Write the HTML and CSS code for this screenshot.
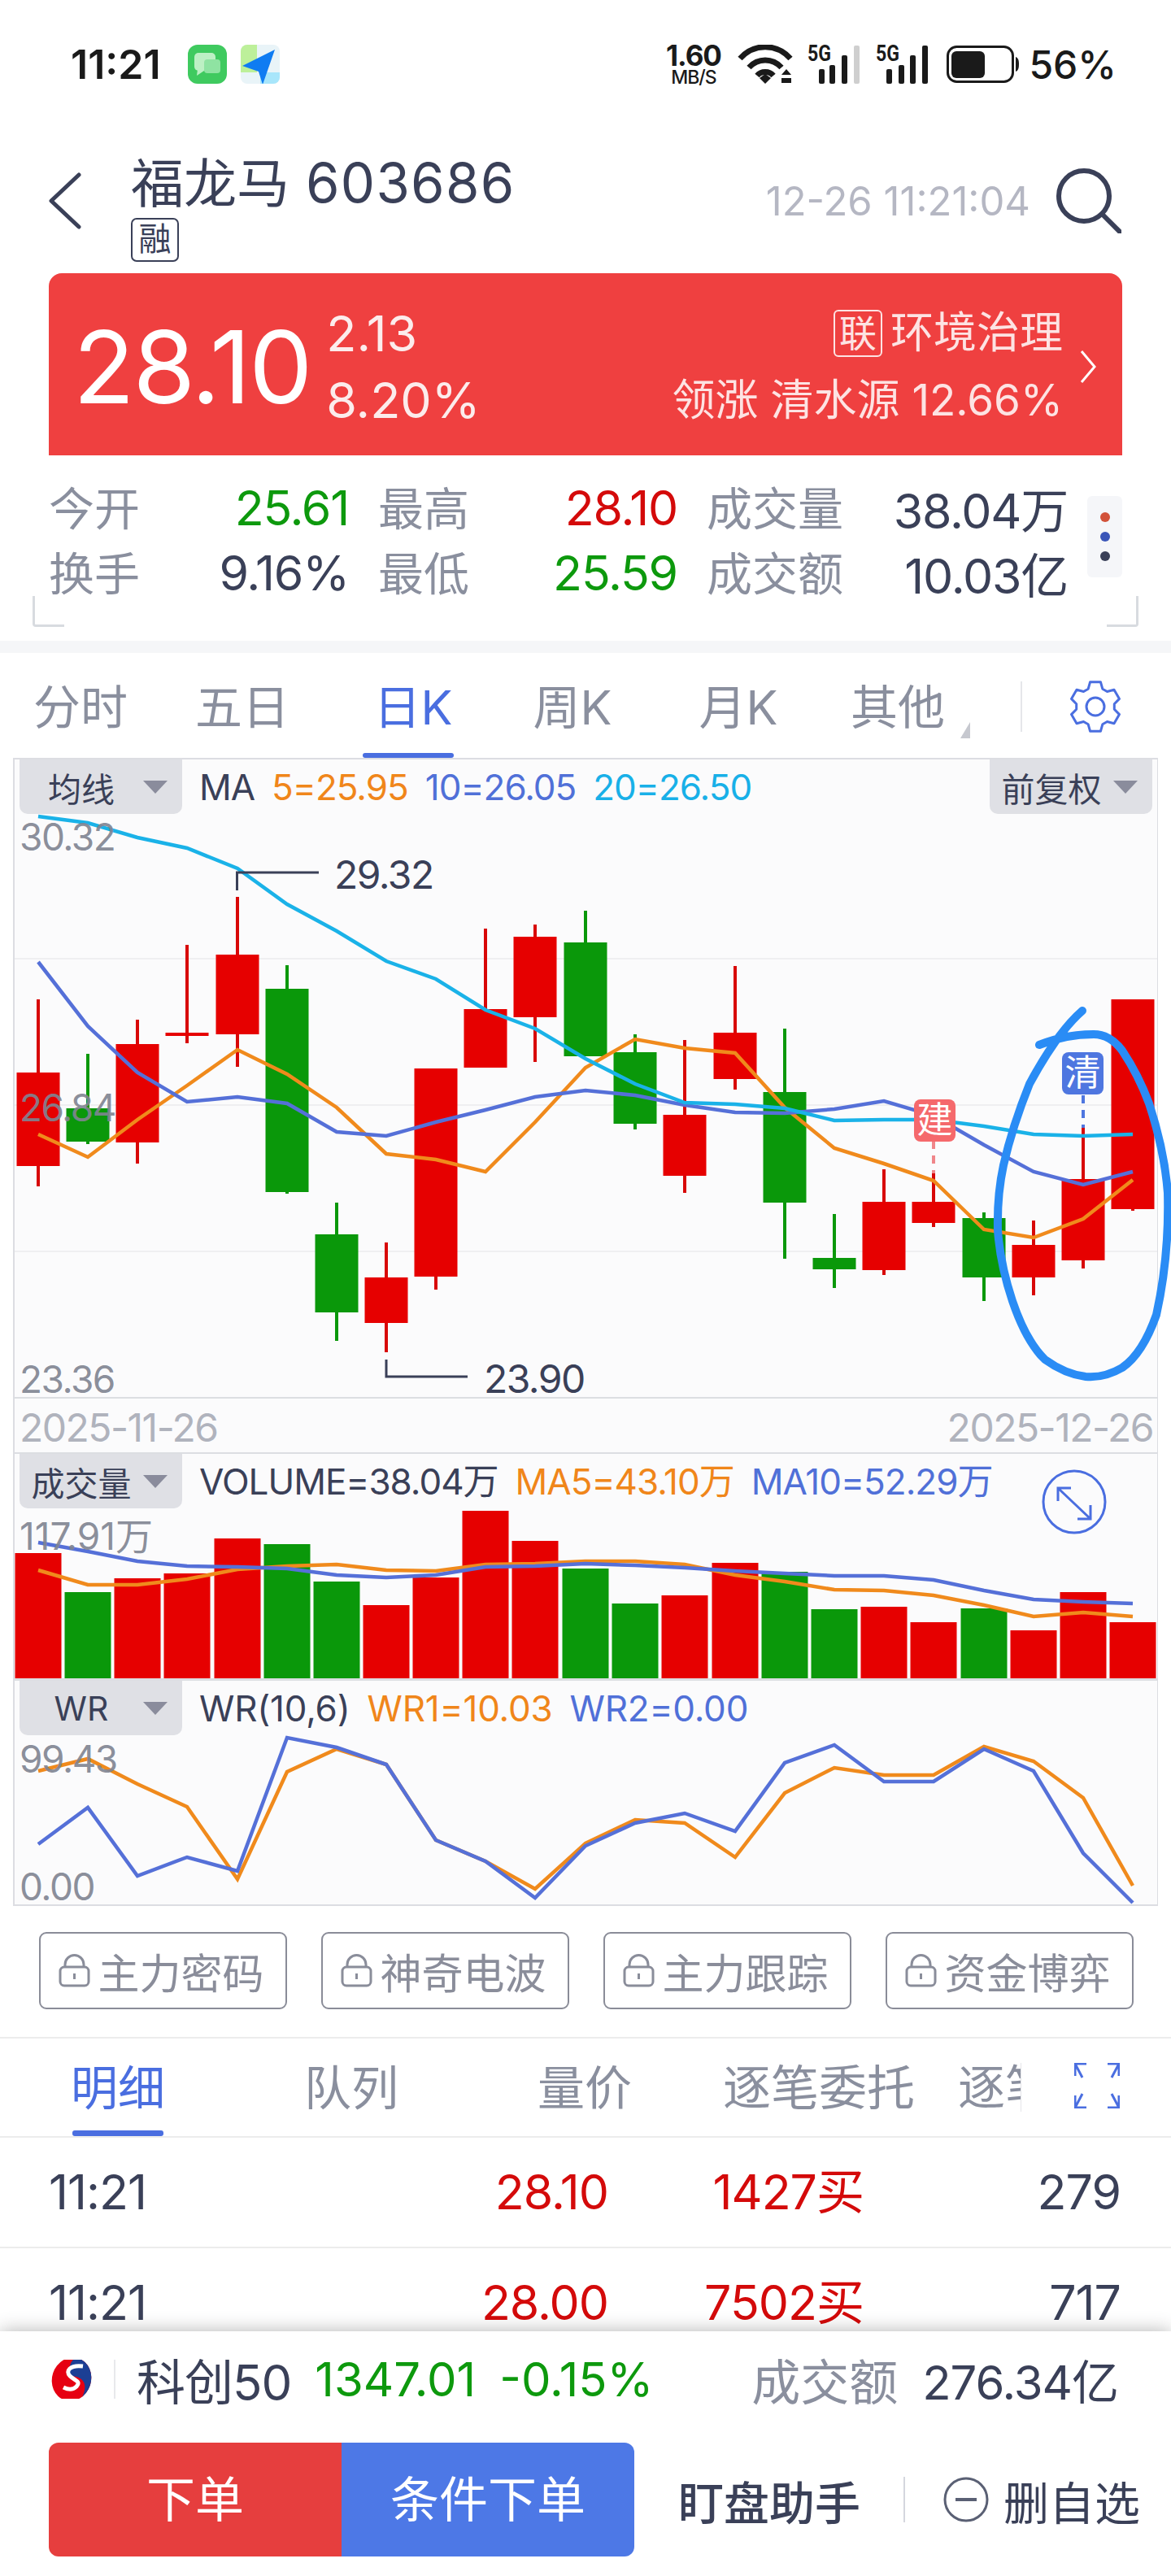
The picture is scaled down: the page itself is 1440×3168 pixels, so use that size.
FILE: index.html
```html
<!doctype html>
<html lang="zh">
<head>
<meta charset="utf-8">
<title>福龙马603686</title>
<link rel="stylesheet" href="styles.css">
</head>
<body>

<div class="status">
    <span class="clock">11:21</span>
    <svg class="app-icon app-first" viewBox="0 0 48 48">
        <rect width="48" height="48" rx="12" fill="#3fca5f"/>
        <rect x="8" y="10" width="26" height="22" rx="5" fill="#bdf0c4"/>
        <path d="M12 30l-1 8 9-6z" fill="#bdf0c4"/>
        <rect x="20" y="18" width="20" height="17" rx="4" fill="#8fe3a2"/>
    </svg>
    <svg class="app-icon app-second" viewBox="0 0 48 48">
        <rect width="48" height="48" rx="8" fill="#e9f4f8"/>
        <path d="M0 8a8 8 0 0 1 8-8h12v34H0z" fill="#bdf09a"/>
        <path d="M24 34h24v6a8 8 0 0 1-8 8H24z" fill="#a8e6fb"/>
        <path d="M42 6L2 26l20 7 5 16z" fill="#0f7cf2"/>
    </svg>
    <div class="status-right">
        <div class="speed"><b>1.60</b><span>MB/S</span></div>
        <svg class="wifi" viewBox="0 0 68 48" fill="none" stroke="#1a1a1a" stroke-width="7">
            <path d="M3 17C20 -2 48 -2 65 17"/>
            <path d="M14 28C25 16 43 16 54 28"/>
            <path d="M24 38C29 32 39 32 44 38"/>
            <path d="M34 48l-7-7 7-5 7 5z" fill="#1a1a1a" stroke="none"/>
            <path d="M60 30l6 7H54zM54 41h12v6H54z" fill="#1a1a1a" stroke="none"/>
        </svg>
        <svg class="signal" viewBox="0 0 64 48">
            <text x="0" y="20" class="signal-5g" textLength="29" lengthAdjust="spacingAndGlyphs">5G</text>
            <rect x="14" y="30" width="7" height="18" rx="2"/>
            <rect x="27" y="25" width="7" height="23" rx="2"/>
            <rect x="42" y="13" width="7" height="35" rx="2"/>
            <rect x="57" y="1" width="7" height="47" rx="2" fill="#cfcfcf"/>
        </svg>
        <svg class="signal" viewBox="0 0 64 48">
            <text x="0" y="20" class="signal-5g" textLength="29" lengthAdjust="spacingAndGlyphs">5G</text>
            <rect x="13" y="30" width="7" height="18" rx="2"/>
            <rect x="28" y="25" width="7" height="23" rx="2"/>
            <rect x="42" y="13" width="7" height="35" rx="2"/>
            <rect x="57" y="1" width="7" height="47" rx="2"/>
        </svg>
        <svg class="battery" viewBox="0 0 89 46">
            <rect x="1.5" y="1.5" width="80" height="43" rx="11" fill="none" stroke="#1a1a1a" stroke-width="3"/>
            <rect x="6" y="7" width="41" height="33" rx="6" fill="#1a1a1a"/>
            <path d="M85 14c3 1 4 4 4 9s-1 8-4 9z" fill="#1a1a1a"/>
        </svg>
        <span class="percent">56%</span>
    </div>
</div>

<div class="header">
    <svg class="back" viewBox="0 0 40 70" fill="none" stroke="#3a4058" stroke-width="5" stroke-linecap="round" stroke-linejoin="round">
        <path d="M37 3L3 35l34 32"/>
    </svg>
    <div class="title-block">
        <div class="title">福龙马<span class="code">603686</span></div>
        <span class="rong">融</span>
    </div>
    <span class="stamp">12-26 11:21:04</span>
    <svg class="search" viewBox="0 0 80 80" fill="none" stroke="#3a4058" stroke-width="6" stroke-linecap="round">
        <circle cx="34" cy="34" r="31"/>
        <path d="M58 58l20 20"/>
    </svg>
</div>

<div class="quote">
    <span class="price">28.10</span>
    <div class="change">
        <span>2.13</span>
        <span>8.20%</span>
    </div>
    <div class="sector">
        <div class="sector-top"><span class="lian">联</span>环境治理</div>
        <div>领涨 清水源 12.66%</div>
    </div>
    <svg class="quote-arrow" viewBox="0 0 20 40" fill="none" stroke="#fff" stroke-width="3">
        <path d="M2 1l16 19L2 39"/>
    </svg>
</div>

<div class="stats">
    <div class="stats-grid">
        <div class="stat"><span class="label">今开</span><span class="val green">25.61</span></div>
        <div class="stat"><span class="label">最高</span><span class="val red">28.10</span></div>
        <div class="stat"><span class="label">成交量</span><span class="val">38.04万</span></div>
        <div class="stat"><span class="label">换手</span><span class="val">9.16%</span></div>
        <div class="stat"><span class="label">最低</span><span class="val green">25.59</span></div>
        <div class="stat"><span class="label">成交额</span><span class="val">10.03亿</span></div>
    </div>
    <div class="more">
        <i class="dot dot-red"></i>
        <i class="dot dot-blue"></i>
        <i class="dot dot-dark"></i>
    </div>
</div>

<div class="periods">
    <span class="period">分时</span>
    <span class="period">五日</span>
    <span class="period active">日K</span>
    <span class="period">周K</span>
    <span class="period">月K</span>
    <span class="period period-other">其他</span>
    <svg class="gear" viewBox="-33 -33 66 66" fill="none" stroke="#4a6ee0" stroke-width="3" stroke-linejoin="round">
        <polygon points="-6.4,-30.3 6.4,-30.3 8.8,-21.8 14.5,-18.5 23,-20.7 29.5,-9.6 23.3,-3.3 23.3,3.3 29.5,9.6 23,20.7 14.5,18.5 8.8,21.8 6.4,30.3 -6.4,30.3 -8.8,21.8 -14.5,18.5 -23,20.7 -29.5,9.6 -23.3,3.3 -23.3,-3.3 -29.5,-9.6 -23,-20.7 -14.5,-18.5 -8.8,-21.8"/>
        <circle r="11"/>
    </svg>
</div>

<div class="chart-wrap">
    <div class="chart">
        <div class="pane pane-main">
            <div class="pane-head">
                <div class="picker"><span>均线</span><i></i></div>
                <span class="leg dark">MA</span>
                <span class="leg orange">5=25.95</span>
                <span class="leg blue">10=26.05</span>
                <span class="leg cyan">20=26.50</span>
                <div class="picker picker-right"><span>前复权</span><i></i></div>
            </div>
        </div>
        <div class="pane-dates">
            <span>2025-11-26</span>
            <span>2025-12-26</span>
        </div>
        <div class="pane pane-vol">
            <div class="pane-head">
                <div class="picker"><span>成交量</span><i></i></div>
                <span class="leg dark">VOLUME=38.04万</span>
                <span class="leg orange">MA5=43.10万</span>
                <span class="leg blue">MA10=52.29万</span>
            </div>
        </div>
        <div class="pane pane-wr">
            <div class="pane-head">
                <div class="picker"><span>WR</span><i></i></div>
                <span class="leg dark">WR(10,6)</span>
                <span class="leg orange">WR1=10.03</span>
                <span class="leg blue">WR2=0.00</span>
            </div>
        </div>
    </div>

    <!-- all of the plot, in page coordinates -->
    <svg class="plot" viewBox="0 932 1440 1412" fill="none">
        <path class="grid" d="M18 1179H1423M18 1359H1423M18 1539H1423"/>

        <path class="wick-red" d="M47 1229V1459M169 1254V1431M230 1162V1283M292 1103V1312M475 1528V1663M536 1314V1586M597 1142V1313M658 1137V1306M842 1279V1467M904 1188V1340M1087 1438V1568M1148 1443V1509M1271 1501V1593M1332 1387V1560M1393 1229V1489"/>
        <path class="wick-green" d="M108 1296V1407M353 1187V1468M414 1479V1649M720 1120V1299M781 1272V1389M965 1265V1548M1026 1493V1584M1210 1491V1600"/>
        <path class="body-red" d="M20.5 1319h53v115h-53zM142.5 1284h53v121h-53zM203.5 1270h53v4h-53zM265.5 1174h53v98h-53zM448.5 1571h53v56h-53zM509.5 1314h53v256h-53zM570.5 1241h53v72h-53zM631.5 1152h53v99h-53zM815.5 1371h53v75h-53zM877.5 1270h53v57h-53zM1060.5 1478h53v84h-53zM1121.5 1478h53v26h-53zM1244.5 1531h53v40h-53zM1305.5 1450h53v100h-53zM1366.5 1229h53v258h-53z"/>
        <path class="body-green" d="M81.5 1363h53v41h-53zM326.5 1216h53v250h-53zM387.5 1518h53v96h-53zM693.5 1159h53v140h-53zM754.5 1294h53v88h-53zM938.5 1343h53v136h-53zM999.5 1547h53v14h-53zM1183.5 1498h53v73h-53z"/>

        <polyline class="line-orange" points="47,1395 108,1423 169,1377 230,1335 292,1291 353,1321 414,1362 475,1419 536,1426 597,1441 658,1380 720,1313 781,1278 842,1289 904,1295 965,1362 1026,1412 1087,1431 1148,1452 1210,1512 1271,1522 1332,1499 1393,1451"/>
        <polyline class="line-blue" points="47,1183 108,1262 169,1319 230,1355 292,1349 353,1357 414,1392 475,1397 536,1380 597,1365 658,1349 720,1341 781,1347 842,1359 904,1368 965,1369 1026,1364 1087,1354 1148,1372 1210,1408 1271,1441 1332,1457 1393,1441"/>
        <polyline class="line-cyan" points="47,1004 108,1012 169,1030 230,1043 292,1068 353,1112 414,1145 475,1182 536,1204 597,1242 658,1265 720,1302 781,1333 842,1356 904,1358 965,1363 1026,1378 1087,1377 1148,1377 1210,1385 1271,1395 1332,1397 1393,1395"/>

        <path class="marker" d="M291.500 1095V1073H392M475 1672V1693H575"/>
        <path class="dash-red" d="M1148 1403V1443"/>
        <path class="dash-blue" d="M1332 1347V1387"/>

        <path class="body-red" d="M18.500 1910h57V2064h-57zM140.500 1941h57V2064h-57zM201.500 1935h57V2064h-57zM263.500 1892h57V2064h-57zM446.500 1974h57V2064h-57zM507.500 1940h57V2064h-57zM568.500 1858h57V2064h-57zM629.500 1895h57V2064h-57zM813.500 1962h57V2064h-57zM875.500 1922h57V2064h-57zM1058.500 1976h57V2064h-57zM1119.500 1995h57V2064h-57zM1242.500 2005h57V2064h-57zM1303.500 1958h57V2064h-57zM1364.500 1995h57V2064h-57z"/>
        <path class="body-green" d="M79.500 1958h57V2064h-57zM324.500 1899h57V2064h-57zM385.500 1945h57V2064h-57zM691.500 1929h57V2064h-57zM752.500 1972h57V2064h-57zM936.500 1933h57V2064h-57zM997.500 1979h57V2064h-57zM1181.500 1978h57V2064h-57z"/>

        <polyline class="line-orange" points="47,1931 108,1949 169,1949 230,1942 292,1930 353,1926 414,1924 475,1931 536,1932 597,1924 658,1923 720,1920 781,1920 842,1924 904,1937 965,1945 1026,1955 1087,1956 1148,1962 1210,1974 1271,1988 1332,1983 1393,1988"/>
        <polyline class="line-blue" points="47,1897 108,1908 169,1920 230,1926 292,1927 353,1929 414,1937 475,1940 536,1937 597,1927 658,1926 720,1923 781,1925 842,1928 904,1932 965,1935 1026,1938 1087,1938 1148,1943 1210,1956 1271,1967 1332,1970 1393,1972"/>

        <polyline class="line-orange" points="47,2178 108,2163 169,2194 230,2222 292,2311 353,2179 414,2151 475,2170 536,2263 597,2289 658,2323 720,2267 781,2238 842,2242 904,2284 965,2205 1026,2174 1087,2183 1148,2183 1210,2148 1271,2166 1332,2211 1393,2319"/>
        <polyline class="line-blue" points="47,2268 108,2223 169,2307 230,2284 292,2301 353,2137 414,2149 475,2170 536,2263 597,2289 658,2334 720,2270 781,2242 842,2230 904,2252 965,2168 1026,2146 1087,2191 1148,2191 1210,2151 1271,2178 1332,2279 1393,2340"/>
    </svg>

    <span class="axis axis-high">30.32</span>
    <span class="axis axis-mid">26.84</span>
    <span class="axis axis-low">23.36</span>
    <span class="axis axis-vol">117.91万</span>
    <span class="axis axis-wr-high">99.43</span>
    <span class="axis axis-wr-low">0.00</span>
    <span class="peak peak-high">29.32</span>
    <span class="peak peak-low">23.90</span>
    <span class="trade-tag tag-build">建</span>
    <span class="trade-tag tag-clear">清</span>

    <svg class="fit-btn" viewBox="0 0 80 80" fill="none" stroke="#4a6ee0" stroke-width="3">
        <circle cx="40" cy="40" r="38"/>
        <path d="M21 24L59 60M20 39V23H36M60 44V61H44"/>
    </svg>

    <!-- the blue ring somebody drew over the screenshot -->
    <svg class="plot scribble" viewBox="0 932 1440 1412" fill="none">
        <path d="M1278 1285Q1310 1272 1345 1272Q1365 1272 1380 1292Q1400 1322 1413 1357Q1432 1415 1436 1467Q1438 1545 1422 1617Q1405 1665 1380 1682Q1358 1695 1335 1693Q1310 1690 1285 1672Q1262 1650 1245 1600Q1230 1555 1227 1513Q1226 1470 1234 1433Q1245 1385 1266 1333Q1300 1270 1331 1243"/>
    </svg>
</div>

<div class="tools">
    <div class="tool"><svg class="lock" viewBox="0 0 39 41" fill="none"><path d="M8 17V13a11.500 11.500 0 0 1 23 0v4"/><rect x="2" y="16" width="35" height="23" rx="5"/><path d="M19.500 24v7"/></svg>主力密码</div>
    <div class="tool"><svg class="lock" viewBox="0 0 39 41" fill="none"><path d="M8 17V13a11.500 11.500 0 0 1 23 0v4"/><rect x="2" y="16" width="35" height="23" rx="5"/><path d="M19.500 24v7"/></svg>神奇电波</div>
    <div class="tool"><svg class="lock" viewBox="0 0 39 41" fill="none"><path d="M8 17V13a11.500 11.500 0 0 1 23 0v4"/><rect x="2" y="16" width="35" height="23" rx="5"/><path d="M19.500 24v7"/></svg>主力跟踪</div>
    <div class="tool"><svg class="lock" viewBox="0 0 39 41" fill="none"><path d="M8 17V13a11.500 11.500 0 0 1 23 0v4"/><rect x="2" y="16" width="35" height="23" rx="5"/><path d="M19.500 24v7"/></svg>资金博弈</div>
</div>

<div class="detail-tabs">
    <span class="dt active">明细</span>
    <span class="dt">队列</span>
    <span class="dt">量价</span>
    <span class="dt dt-wide">逐笔委托</span>
    <span class="dt dt-cut">逐笔成交</span>
    <svg class="fullscreen" viewBox="0 0 56 56" fill="none" stroke="#4a6ee0" stroke-width="3">
        <path d="M1 16V1H15M1 1L10 18M55 16V1H41M55 1L46 18M1 40V55H15M1 55L10 38M55 40V55H41M55 55L46 38"/>
    </svg>
</div>

<div class="trades">
    <div class="trade">
        <span class="t-time">11:21</span>
        <span class="red">28.10</span>
        <span class="red">1427买</span>
        <span>279</span>
    </div>
    <div class="trade">
        <span class="t-time">11:21</span>
        <span class="red">28.00</span>
        <span class="red">7502买</span>
        <span>717</span>
    </div>
</div>

<div class="dock">
    <div class="index-row">
        <svg class="logo" viewBox="0 0 56 48">
            <defs><clipPath id="logo-clip"><ellipse cx="28" cy="24" rx="24" ry="27" transform="rotate(18 28 24)"/></clipPath></defs>
            <g clip-path="url(#logo-clip)">
                <rect width="56" height="48" fill="#e60012"/>
                <path d="M30 0H56V48H40C48 34 46 20 26 20C24 12 26 4 30 0Z" fill="#1c3f94"/>
                <path d="M42 8C26 6 20 14 26 20C32 26 40 26 34 33C30 37 24 37 18 34" fill="none" stroke="#fff" stroke-width="5"/>
            </g>
        </svg>
        <i class="index-sep"></i>
        <span class="index-name">科创50</span>
        <span class="index-val green">1347.01</span>
        <span class="index-val green">-0.15%</span>
        <span class="index-amount label">成交额</span>
        <span class="index-total">276.34亿</span>
    </div>
    <div class="actions">
        <div class="order">
            <span class="order-red">下单</span>
            <span class="order-blue">条件下单</span>
        </div>
        <span class="assist">盯盘助手</span>
        <i class="action-sep"></i>
        <svg class="minus" viewBox="0 0 56 56" fill="none" stroke="#5a6074" stroke-width="3">
            <circle cx="28" cy="28" r="26"/>
            <path d="M15 28H41" stroke-width="4"/>
        </svg>
        <span class="remove">删自选</span>
    </div>
</div>

</body>
</html>
```

FILE: styles.css
```css
* { box-sizing: border-box; }
html, body { margin: 0; padding: 0; }
body {
    width: 1440px;
    height: 3168px;
    overflow: hidden;
    background: #fff;
    color: #3a4058;
    font-family: Inter, "Noto Sans CJK SC", sans-serif;
}
i { display: block; font-style: normal; }

.red { color: #d40a0a; }
.green { color: #0d990d; }
.label { color: #8a8f9e; }

/* status bar */
.status {
    display: flex;
    align-items: center;
    height: 158px;
    padding: 0 67px 0 87px;
    color: #1a1a1a;
}
.clock { font-size: 50px; font-weight: 600; letter-spacing: 0; }
.app-icon { width: 48px; height: 48px; }
.app-first { margin-left: 33px; }
.app-second { margin-left: 17px; }
.status-right { display: flex; align-items: center; margin-left: auto; }
.speed { display: flex; flex-direction: column; align-items: center; width: 71px; line-height: 1; }
.speed b { font-size: 35px; font-weight: 700; line-height: 32px; letter-spacing: -1px; }
.speed span { font-size: 23px; font-weight: 500; line-height: 22px; letter-spacing: -1px; }
.wifi { width: 68px; height: 48px; margin-left: 19px; }
.signal { width: 64px; height: 48px; margin-left: 18px; fill: #1a1a1a; overflow: visible; }
.signal + .signal { margin-left: 20px; }
.signal-5g { font-family: Roboto, sans-serif; font-size: 27px; font-weight: 700; }
.battery { width: 89px; height: 46px; margin-left: 23px; }
.percent { margin-left: 12px; font-size: 48px; font-weight: 500; letter-spacing: 0; }

/* header */
.header { display: flex; align-items: center; height: 178px; padding: 0 61px 0 60px; }
.back { width: 40px; height: 70px; }
.title-block { align-self: flex-start; margin-left: 61px; padding-top: 31px; }
.title { font-size: 65px; line-height: 72px; white-space: nowrap; }
.code { margin-left: 20px; font-size: 67px; letter-spacing: 1.300px; }
.rong {
    display: block;
    width: 59px;
    height: 54px;
    margin-top: 6px;
    border: 2px solid #3a4058;
    border-radius: 7px;
    font-size: 40px;
    line-height: 48px;
    text-align: center;
}
.stamp { margin-left: auto; font-size: 49px; color: #b5b7c3; letter-spacing: 0; }
.search { width: 80px; height: 80px; margin-left: 32px; }

/* red quote card */
.quote {
    display: flex;
    align-items: center;
    height: 224px;
    margin: 0 60px;
    padding: 6px 32px 0 30px;
    background: #ef4040;
    border-radius: 16px 16px 0 0;
    color: #fff;
}
.price { font-size: 124px; line-height: 1; letter-spacing: -2.200px; }
.change { display: flex; flex-direction: column; margin-left: 19px; font-size: 61px; line-height: 82px; color: #fcecec; }
.sector { margin-left: auto; font-size: 53px; line-height: 83px; text-align: right; color: #fde3e3; white-space: nowrap; }
.sector-top { display: flex; align-items: center; justify-content: flex-end; }
.lian {
    width: 60px;
    height: 58px;
    margin-right: 10px;
    border: 2px solid #fde3e3;
    border-radius: 6px;
    font-size: 46px;
    line-height: 52px;
    text-align: center;
}
.quote-arrow { width: 20px; height: 40px; margin-left: 21px; }

/* stats */
.stats { position: relative; display: flex; height: 243px; padding: 24px 60px 0; border-bottom: 15px solid #f5f6f8; }
.stats::before, .stats::after {
    content: "";
    position: absolute;
    top: 173px;
    width: 36px;
    height: 35px;
    border-bottom: 3px solid #d8dbe0;
}
.stats::before { left: 40px; border-left: 3px solid #d8dbe0; border-bottom-left-radius: 4px; }
.stats::after { right: 40px; border-right: 3px solid #d8dbe0; border-bottom-right-radius: 4px; }
.stats-grid { display: grid; grid-template-columns: 369px 368px 444px; column-gap: 36px; grid-auto-rows: 80px; width: 1250px; }
.stat { display: flex; align-items: center; justify-content: space-between; }
.stat .label { margin-bottom: 5px; font-size: 56px; }
.val { font-size: 59px; letter-spacing: -1.200px; white-space: nowrap; }
.more {
    display: flex;
    flex-direction: column;
    align-items: center;
    gap: 12px;
    width: 43px;
    height: 100px;
    margin: 26px 0 0 27px;
    padding-top: 20px;
    background: #f5f6f9;
    border-radius: 6px;
}
.dot { width: 12px; height: 12px; border-radius: 50%; }
.dot-red { background: #d2523a; }
.dot-blue { background: #3a55b8; }
.dot-dark { background: #3a4058; }

/* period tabs */
.periods {
    display: grid;
    grid-template-columns: 198px 200px 220px 172px 236px 156px 1fr;
    align-items: center;
    height: 129px;
    padding-bottom: 10px;
}
.period { position: relative; height: 119px; font-size: 58px; line-height: 134px; text-align: center; color: #8a8f9e; }
.period.active { color: #4a6ee0; }
.period.active::after {
    content: "";
    position: absolute;
    left: 48px;
    bottom: -10px;
    width: 112px;
    height: 6px;
    border-radius: 3px;
    background: #4a6ee0;
}
.period-other::after {
    content: "";
    position: absolute;
    right: -11px;
    bottom: 14px;
    border-left: 12px solid transparent;
    border-bottom: 20px solid #c6c8cf;
}
.gear { width: 66px; height: 66px; margin-left: 132px; margin-top: 12px; }
.periods::after {
    content: "";
    position: absolute;
    left: 1255px;
    top: 838px;
    width: 2px;
    height: 62px;
    background: #e5e6ea;
}

/* chart */
.chart-wrap { position: relative; height: 1412px; }
.chart {
    width: 1408px;
    height: 1412px;
    margin-left: 16px;
    border: 2px solid #dcdde2;
    border-right-width: 1px;
    background: #fbfbfc;
}
.pane { position: relative; }
.pane-main { height: 786px; border-bottom: 2px solid #dcdee2; }
.pane-dates {
    display: flex;
    justify-content: space-between;
    align-items: center;
    height: 68px;
    padding: 4px 5px 0 6px;
    border-bottom: 2px solid #dcdee2;
    font-size: 48px;
    letter-spacing: -1.500px;
    color: #b0b3bd;
}
.pane-vol { height: 279px; border-bottom: 3px solid #dcdee2; }
.pane-wr { height: 275px; }
.pane-head { position: relative; z-index: 2; display: flex; gap: 21px; height: 67px; }
.picker {
    display: flex;
    align-items: center;
    width: 200px;
    height: 67px;
    margin-left: 6px;
    background: #dfe0e5;
    border-radius: 0 0 10px 10px;
    font-size: 41px;
}
.picker span { width: 152px; text-align: center; }
.picker i {
    border-left: 15px solid transparent;
    border-right: 15px solid transparent;
    border-top: 16px solid #8a8c9c;
}
.picker-right { margin-left: auto; margin-right: 6px; }
.leg { font-size: 44px; line-height: 68px; letter-spacing: -1px; white-space: nowrap; }
.pane-wr .leg { letter-spacing: -.2px; }
.dark { color: #3a4058; }
.orange { color: #f0861a; }
.blue { color: #5070d8; }
.cyan { color: #18b0e8; }

.plot { position: absolute; left: 0; top: 0; z-index: 1; width: 1440px; height: 1412px; }
.grid { stroke: #efeff1; stroke-width: 2; }
.wick-red { stroke: #d80808; stroke-width: 4; }
.wick-green { stroke: #0a980a; stroke-width: 4; }
.body-red { fill: #e60000; }
.body-green { fill: #0a980a; }
.line-orange { stroke: #f08a1c; stroke-width: 4.500; }
.line-blue { stroke: #5570d8; stroke-width: 4.500; }
.line-cyan { stroke: #1ab2e8; stroke-width: 4.500; }
.marker { stroke: #3a4058; stroke-width: 3; }
.dash-red { stroke: #f0868a; stroke-width: 4; stroke-dasharray: 10 8; }
.dash-blue { stroke: #4e76e0; stroke-width: 4; stroke-dasharray: 10 8; }
.scribble { z-index: 4; }
.scribble path { stroke: #2a8cf5; stroke-width: 10; stroke-linecap: round; }

.axis {
    position: absolute;
    left: 24px;
    z-index: 2;
    font-size: 46px;
    line-height: 46px;
    letter-spacing: -1.500px;
    color: rgba(128, 132, 146, .92);
}
.axis-high { top: 74px; }
.axis-mid { top: 407px; }
.axis-low { top: 741px; }
.axis-vol { top: 934px; letter-spacing: 0; }
.axis-wr-high { top: 1208px; }
.axis-wr-low { top: 1365px; }
.peak { position: absolute; z-index: 2; font-size: 48px; line-height: 48px; letter-spacing: -1.500px; }
.peak-high { top: 120px; left: 411px; }
.peak-low { top: 740px; left: 595px; }
.trade-tag {
    position: absolute;
    z-index: 3;
    width: 51px;
    height: 52px;
    border-radius: 8px;
    font-size: 44px;
    line-height: 50px;
    text-align: center;
    color: #fff;
}
.tag-build { left: 1124px; top: 420px; background: #f5696c; }
.tag-clear { left: 1306px; top: 362px; background: #4e76e0; }
.fit-btn { position: absolute; left: 1281px; top: 875px; z-index: 3; width: 80px; height: 80px; }

/* locked tools */
.tools { display: flex; gap: 42px; padding: 32px 0 0 48px; height: 163px; border-bottom: 2px solid #ececec; }
.tool {
    display: flex;
    align-items: center;
    justify-content: center;
    gap: 9px;
    width: 305px;
    height: 95px;
    border: 2px solid #8a8c98;
    border-radius: 9px;
    font-size: 51px;
    color: #8a8d9a;
}
.lock { width: 39px; height: 41px; margin-left: -4px; stroke: #8a8d9a; stroke-width: 3; }

/* detail tabs */
.detail-tabs {
    display: flex;
    align-items: center;
    height: 122px;
    padding-left: 87px;
    border-bottom: 2px solid #ececec;
    font-size: 58px;
    color: #8a8f9e;
}
.dt { position: relative; width: 287px; height: 120px; line-height: 122px; white-space: nowrap; }
.dt.active { color: #4a6ee0; }
.dt.active::after {
    content: "";
    position: absolute;
    left: 2px;
    bottom: 0;
    width: 112px;
    height: 7px;
    border-radius: 3px;
    background: #4a6ee0;
}
.dt-wide { width: 289px; margin-left: -59px; font-size: 59px; }
.dt-cut { width: 78px; height: 60px; line-height: 60px; overflow: hidden; border-right: 1px solid #e4e5e9; }
.fullscreen { width: 56px; height: 56px; margin-left: 65px; margin-top: -4px; }

/* trade list */
.trades { height: 238px; overflow: hidden; }
.trade {
    display: grid;
    grid-template-columns: 320px 368px 314px 316px;
    height: 136px;
    padding-left: 60px;
    border-bottom: 2px solid #ececec;
    font-size: 59px;
    line-height: 134px;
    letter-spacing: -1px;
    text-align: right;
}
.t-time { text-align: left; }

/* bottom dock */
.dock { position: relative; z-index: 5; background: #fff; box-shadow: 0 0 22px rgba(0, 0, 0, .3); height: 301px; }
.index-row { display: flex; align-items: center; height: 137px; padding: 0 65px 20px 60px; font-size: 58px; }
.logo { width: 56px; height: 48px; }
.index-sep { width: 2px; height: 48px; margin-left: 24px; background: #e8e9ec; }
.index-name { margin-left: 26px; font-size: 60px; letter-spacing: -1px; }
.index-val { margin-left: 29px; letter-spacing: 0; }
.index-amount { margin-left: auto; font-size: 60px; }
.index-total { margin-left: 30px; letter-spacing: -1px; }

.actions { display: flex; align-items: center; height: 140px; padding-left: 60px; }
.order { display: flex; width: 720px; height: 140px; border-radius: 12px; overflow: hidden; color: #fff; font-size: 60px; text-align: center; line-height: 140px; }
.order-red { width: 360px; background: #e63e3e; }
.order-blue { width: 360px; background: #4d78e6; }
.assist { margin-left: 54px; font-size: 56px; font-weight: 500; }
.action-sep { width: 2px; height: 56px; margin-left: 53px; background: #d5d7de; }
.minus { width: 56px; height: 56px; margin-left: 47px; }
.remove { margin-left: 18px; font-size: 56px; letter-spacing: 0; }
```
